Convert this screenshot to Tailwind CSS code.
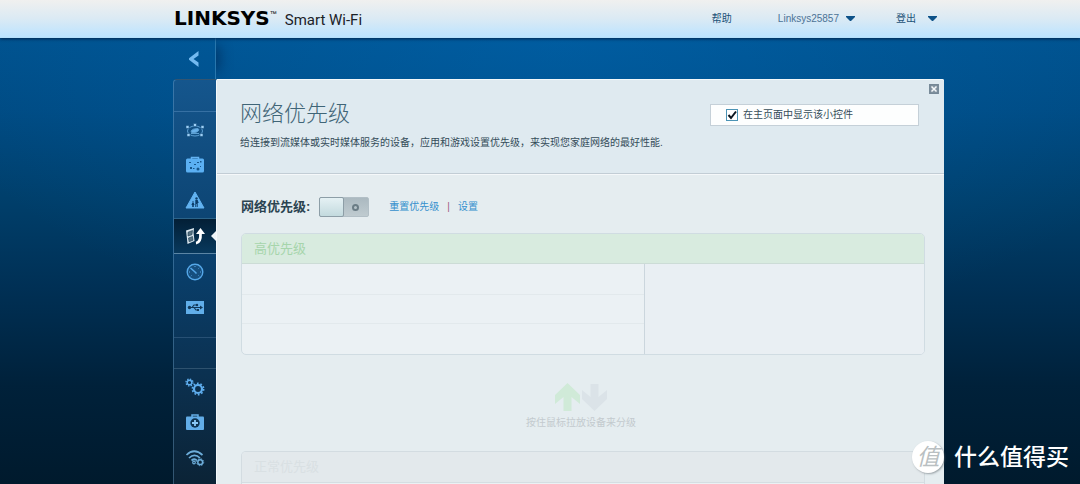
<!DOCTYPE html>
<html lang="zh-CN">
<head>
<meta charset="utf-8">
<meta name="viewport" content="width=device-width, initial-scale=1">
<title>Linksys Smart Wi-Fi</title>
<script src="https://cdn.jsdelivr.net/npm/@tailwindcss/browser@4"></script>
</head>
<body class="relative flex min-h-screen flex-col bg-[#001b2e] font-['Liberation_Sans','Noto_Sans_CJK_SC',sans-serif] text-[10px] leading-4 text-[#2b4350]">

<header class="relative z-10 h-[38px] shrink-0 border-b border-[#b5e0fb] bg-linear-to-b from-[#f0f0ef] via-[#dbeaf4] to-[#bbe3ff] shadow-[0_1px_3px_rgba(0,25,60,0.8)]">
  <div class="mx-auto flex h-full max-w-[808px] items-center pr-[7px] pl-[38px]">
    <a href="#" class="flex items-baseline text-black">
      <span class="font-['DejaVu_Sans',sans-serif] text-[20px] leading-6 font-bold">LINKSYS</span>
      <sup class="self-start pt-2 text-[7px] leading-none">™</sup>
      <span class="ml-2 font-['Roboto',sans-serif] text-[15px] leading-6 text-[#1c2228]">Smart Wi-Fi</span>
    </a>
    <nav class="ml-auto flex items-center text-[#1c5278]">
      <a href="#" class="mr-[46px]">帮助</a>
      <button type="button" class="mr-[41px] flex items-center gap-[7px] text-[#4c7396]">Linksys25857
        <svg class="size-[9px]" viewBox="0 0 9 9" fill="#0e5288" aria-hidden="true"><path d="M0 2h9v1L5 7H4L0 3z"/></svg>
      </button>
      <button type="button" class="flex items-center gap-3">登出
        <svg class="size-[9px]" viewBox="0 0 9 9" fill="#0e5288" aria-hidden="true"><path d="M0 2h9v1L5 7H4L0 3z"/></svg>
      </button>
    </nav>
  </div>
</header>

<div class="flex grow flex-col bg-[radial-gradient(ellipse_60%_70%_at_52%_0%,rgba(0,115,200,0.32),transparent),linear-gradient(to_bottom,#00528e_0%,#004b83_16%,#003f6b_36%,#003055_56%,#00213a_78%,#001a2d_100%)]">
  <div class="mx-auto flex w-full max-w-[808px] grow pl-[37px]">

    <nav aria-label="功能菜单" class="flex w-[43px] shrink-0 flex-col">
      <a href="#" aria-label="返回" class="flex h-[41px] shrink-0 items-center justify-center border-r border-[#2877ad] shadow-[12px_0_12px_-8px_rgba(0,40,85,0.6)]">
        <svg class="h-[18px] w-[10px]" viewBox="0 0 10 18" fill="#74baf0" aria-hidden="true"><path d="M9.500 1v4.500L4.500 9l5 3.500V17L0 9.700V8.300z"/></svg>
      </a>
      <div class="flex grow flex-col rounded-tl-sm border-t border-l border-[#7eb5de]/35 bg-linear-to-b from-[#15568d] via-[#093d68] to-[#0b2336]">
        <div class="h-8 shrink-0 border-b border-[#4e86b5]/60"></div>
        <ul class="h-[106px] shrink-0">
          <li><a href="#" aria-label="网络地图" class="flex h-[35px] items-center justify-center">
            <svg class="h-[18px] w-5" viewBox="0 0 20 18" fill="none" stroke="#5c9fd3" aria-hidden="true"><ellipse cx="10" cy="10" rx="7.500" ry="5"/><path d="M6 10q1.500-2.500 7-2.500l1 1.500q-1 2.500-7 3z" fill="#69b1ea"/><path d="M6 12.500h8"/><path d="M8.500 2.500h3v3h-3zM1 4.500h3v3H1zM16 4.500h3v3h-3zM2 12.500h3v3H2zM15 12.500h3v3h-3z" fill="#9ed0f7" stroke="#17517f" stroke-width=".6"/></svg>
          </a></li>
          <li><a href="#" aria-label="访客访问" class="flex h-[35px] items-center justify-center">
            <svg class="h-[18px] w-5" viewBox="0 0 20 18" aria-hidden="true"><path d="M6.500 3V1.500h7V3" fill="none" stroke="#63b2f2" stroke-width="1.500"/><rect x="1" y="2.500" width="18" height="14" rx="1.500" fill="#5bb0f3"/><g fill="#17568c"><path d="M4 6h2v1H4zM5 11h2v2H5zM9 8h2v1H9zM12 6h2v1h-2zM15 5h1.500v1.500H15zM8 12h1.500v1H8zM15 10h1v1h-1z"/><circle cx="13" cy="13" r="1.500"/></g></svg>
          </a></li>
          <li><a href="#" aria-label="家长控制" class="flex h-9 items-center justify-center">
            <svg class="h-[18px] w-5" viewBox="0 0 20 18" aria-hidden="true"><path d="M10 1 19 17H1z" fill="#62b3f1" stroke="#62b3f1" stroke-linejoin="round"/><g fill="#0c3d69"><circle cx="11.500" cy="7.500" r="1.200"/><path d="M10.300 9h2.400l1 3h-1v4h-.9v-3h-.6v3h-.9zM7.200 12h1.600l.8 2h-.8v2H7.200v-2h-.8z"/><circle cx="8" cy="11" r=".8"/></g></svg>
          </a></li>
        </ul>
        <a href="#" aria-label="网络优先级" aria-current="page" class="relative flex h-9 shrink-0 items-center justify-center border-y border-t-[#2b6389] border-b-[#5b85a4] bg-linear-to-b from-[#031f36] to-[#08395d]">
          <svg class="h-[18px] w-5" viewBox="0 0 20 18" aria-hidden="true"><path d="m1 3.500 8-2.500-.5 4.500L9.500 14l-7 3-.5-5z" fill="#dce8ef"/><path d="M3 5.200 7.500 3.500 7 7.700 3 9zM3.500 11l4-1.500.5 3.700-3.900 1.600z" fill="#597483" stroke="#173a52" stroke-width=".6"/><path d="M11 16.200q5-.7 4.500-10" fill="none" stroke="#fff" stroke-width="2.800"/><path d="M11 7 15.500 1 20 7z" fill="#fff"/></svg>
          <svg class="absolute top-3 right-0 h-[10px] w-[5px]" viewBox="0 0 5 10" fill="#eef4f8" aria-hidden="true"><path d="M5 0v10L0 5z"/></svg>
        </a>
        <ul class="h-[84px] shrink-0 border-b border-[#3a6386]/60">
          <li><a href="#" aria-label="速度测试" class="flex h-[35px] items-center justify-center">
            <svg class="h-[18px] w-5" viewBox="0 0 20 18" fill="none" stroke="#55a8e9" aria-hidden="true"><circle cx="10" cy="9" r="7.800" fill="#164f7f" stroke-width="1.400"/><path d="M10 3v1M4 9h1M15 9h1M14.200 4.800l-.7.700M5.800 13.200l.7-.7M14.200 13.200l-.7-.7"/><path d="m5.500 5 4.500 4 1.500 1.500" stroke-width="1.500"/></svg>
          </a></li>
          <li><a href="#" aria-label="USB 存储" class="flex h-9 items-center justify-center">
            <svg class="h-[18px] w-5" viewBox="0 0 20 18" aria-hidden="true"><rect x="1" y="3" width="18" height="13" fill="#61aee9"/><g fill="none" stroke="#12395a" stroke-width="1.200"><path d="M5 9.500h11M7 9.500l2-2.500h3M9 9.500l2 2.500h2"/></g><g fill="#12395a"><circle cx="4.500" cy="9.500" r="1.700"/><circle cx="12" cy="7" r="1.200"/><path d="m15 7.500 3 2-3 2zM12 11h2v2h-2z"/></g></svg>
          </a></li>
        </ul>
        <div class="h-[31px] shrink-0 border-b border-[#3d5f7a]/70"></div>
        <ul>
          <li><a href="#" aria-label="设置" class="flex h-[35px] items-center justify-center">
            <svg class="h-[18px] w-5" viewBox="0 0 20 18" fill="none" stroke="#5faeee" aria-hidden="true"><circle cx="4.500" cy="4.500" r="2.300" stroke-width="1.400"/><circle cx="4.500" cy="4.500" r="3.500" stroke-width="1.300" stroke-dasharray="1.400 1.349"/><circle cx="13" cy="11" r="4" stroke-width="2.200"/><circle cx="13" cy="11" r="5.600" stroke-width="1.700" stroke-dasharray="1.700 1.819"/></svg>
          </a></li>
          <li><a href="#" aria-label="故障排除" class="flex h-9 items-center justify-center">
            <svg class="h-[18px] w-5" viewBox="0 0 20 18" aria-hidden="true"><path d="M7 4V2h6v2" fill="none" stroke="#65aee6" stroke-width="1.500"/><rect x="1" y="3.500" width="18" height="13.500" rx="1" fill="#62ade8"/><circle cx="10" cy="10" r="4.700" fill="#0e3350"/><path d="M10 7v6M7 10h6" stroke="#8bc8f5" stroke-width="1.800"/></svg>
          </a></li>
          <li><a href="#" aria-label="无线" class="flex h-9 items-center justify-center">
            <svg class="h-[18px] w-5" viewBox="0 0 20 18" fill="none" stroke="#6dadd9" stroke-width="1.700" aria-hidden="true"><path d="M1.500 6q7.500-7.500 16 0M4 9q5.500-5.500 11 0M6.500 11.500q3-2.500 5.500 0"/><circle cx="9" cy="13.500" r="1.300" stroke-width="1.200"/><circle cx="15.200" cy="13.200" r="2.400" stroke-width="1.500"/><circle cx="15.200" cy="13.200" r="3.500" stroke-width="1" stroke-dasharray="1.300 1.450"/></svg>
          </a></li>
        </ul>
      </div>
    </nav>

    <main class="mt-[41px] flex min-w-0 grow flex-col rounded-t-xs border-l border-[#f5f9fb] bg-[#e5edf0]">
      <header class="relative flex h-[95px] shrink-0 items-start justify-between rounded-tr-xs border-t border-b border-t-[#f3f8fa] border-b-[#c2cdd5] bg-[#dfeaf0] pr-[25px] pl-[23px] shadow-[0_1px_0_#f5f8fa]">
        <div class="pt-[18px]">
          <h1 class="text-[22px] leading-8 font-light text-[#3f6577]">网络优先级</h1>
          <p class="mt-[5px] whitespace-nowrap text-[#344c59]">给连接到流媒体或实时媒体服务的设备，应用和游戏设置优先级，来实现您家庭网络的最好性能.</p>
        </div>
        <label class="mt-6 flex h-[22px] w-[209px] shrink-0 items-center gap-[5px] border border-[#c5d0d8] bg-[#fdfefe] pl-[15px] text-[#344c59]">
          <span class="grid size-3">
            <input type="checkbox" checked class="peer col-start-1 row-start-1 size-3 appearance-none border border-[#4b93b5] bg-white">
            <svg class="invisible col-start-1 row-start-1 size-3 peer-checked:visible" viewBox="0 0 12 12" fill="none" stroke="#0b1520" stroke-width="2" aria-hidden="true"><path d="m2.500 6 2.500 3 5-6.500"/></svg>
          </span>
          在主页面中显示该小控件
        </label>
        <button type="button" aria-label="关闭" class="absolute top-1 right-[5px]">
          <svg class="size-[10px]" viewBox="0 0 10 10" fill="none" aria-hidden="true"><path d="M.8.800h8.400v8.400H.8z" fill="#8796a3" stroke="#758796" stroke-width="1.500"/><path d="m2.500 2.500 5 5m0-5-5 5" stroke="#f4f8fa" stroke-width="1.500"/></svg>
        </button>
      </header>

      <div class="pt-[23px] pr-[19px] pl-6">
        <div class="flex h-5 items-center">
          <label for="qos" class="text-[13px] font-bold text-[#2b4350]">网络优先级:</label>
          <span class="ml-[9px] grid h-5 w-[50px]">
            <input id="qos" type="checkbox" role="switch" class="col-start-1 row-start-1 h-5 w-[50px] appearance-none rounded-xs border border-[#b2bfc6] bg-linear-to-b from-[#abb9c0] to-[#bfcbd0]">
            <span class="pointer-events-none col-start-1 row-start-1 flex items-center gap-2">
              <span class="h-5 w-[25px] rounded-xs border border-[#8d9ea7] bg-linear-to-b from-[#e5f1f4] to-[#c3dade]"></span>
              <span class="size-[7px] rounded-full border-2 border-[#6b7d86]"></span>
            </span>
          </span>
          <a href="#" class="ml-5 text-[#3490cd]">重置优先级</a>
          <span class="mx-2 text-[#a05c80]">|</span>
          <a href="#" class="text-[#3490cd]">设置</a>
        </div>

        <section class="mt-4 overflow-hidden rounded-[5px] border border-[#d0dce2] bg-[#ebf1f4]">
          <table class="w-full table-fixed border-separate border-spacing-0">
            <colgroup><col class="w-[59%]"><col></colgroup>
            <thead>
              <tr><th colspan="2" class="h-[30px] border-b border-[#ccdcd6] bg-[#d8ebdf] pl-3 text-left text-[13px] leading-4 font-normal text-[#a6d5ab]">高优先级</th></tr>
            </thead>
            <tbody>
              <tr><td class="h-[31px] border-b border-[#e2e9ec] p-0"></td><td rowspan="3" class="border-l border-[#cbd6dd] bg-[#e9eff3] p-0"></td></tr>
              <tr><td class="h-[29px] border-b border-[#e2e9ec] p-0"></td></tr>
              <tr><td class="h-[30px] p-0"></td></tr>
            </tbody>
          </table>
        </section>

        <div class="flex h-24 flex-col items-center pt-7 pr-1 text-[#c3cace]">
          <svg class="h-7 w-[54px]" viewBox="0 0 54 28" aria-hidden="true"><path d="M13.500 0 26 12v9l-8.500-7v14h-8V14L1 21v-9z" fill="#d0ead8"/><path d="M40.500 28 28 16V7l8.500 7V1h8v13L53 7v9z" fill="#dbe3e8"/></svg>
          <p class="mt-1">按住鼠标拉放设备来分级</p>
        </div>

        <section class="overflow-hidden rounded-t-[5px] border border-b-0 border-[#d3dce1] bg-[#ebf1f4] pb-px">
          <h2 class="h-[31px] border-b border-[#d5dee2] bg-[#e3e9ec] pt-[7px] pl-3 text-[13px] leading-4 text-[#d9e0e3]">正常优先级</h2>
        </section>
      </div>
    </main>
  </div>
</div>

<div class="absolute right-[11px] bottom-[11px] flex items-center gap-[10px] text-white">
  <span class="flex size-8 items-center justify-center rounded-full bg-white text-[23px] leading-8 text-[#b9bfc2] italic shadow-[1px_1px_2px_rgba(80,90,95,0.5)]">值</span>
  <span class="text-[23px] leading-8 font-medium">什么值得买</span>
</div>
</body>
</html>
